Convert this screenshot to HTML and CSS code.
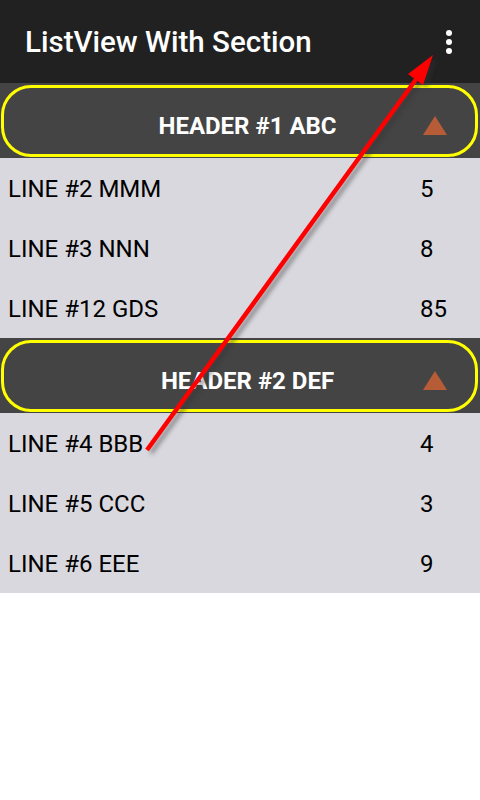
FILE: index.html
```html
<!DOCTYPE html>
<html>
<head>
<meta charset="utf-8">
<link rel="stylesheet" href="styles.css">
</head>
<body>
<div class="screen">
  <header class="appbar">
    <h1 class="title">ListView With Section</h1>
    <div class="menu"><span class="dot"></span><span class="dot"></span><span class="dot"></span></div>
  </header>
  <div class="list">
    <div class="section">
      <div class="pill"><span class="htext">HEADER #1 ABC</span><span class="tri"></span></div>
    </div>
    <div class="row"><span class="name">LINE #2 MMM</span><span class="num">5</span></div>
    <div class="row"><span class="name">LINE #3 NNN</span><span class="num">8</span></div>
    <div class="row"><span class="name">LINE #12 GDS</span><span class="num">85</span></div>
    <div class="section">
      <div class="pill"><span class="htext">HEADER #2 DEF</span><span class="tri"></span></div>
    </div>
    <div class="row"><span class="name">LINE #4 BBB</span><span class="num">4</span></div>
    <div class="row"><span class="name">LINE #5 CCC</span><span class="num">3</span></div>
    <div class="row"><span class="name">LINE #6 EEE</span><span class="num">9</span></div>
  </div>
  <svg class="arrow" width="480" height="800" viewBox="0 0 480 800">
    <defs>
      <filter id="sh" x="-20%" y="-20%" width="140%" height="140%">
        <feGaussianBlur stdDeviation="2"/>
      </filter>
    </defs>
    <g transform="translate(4,3)" opacity="0.45" filter="url(#sh)">
      <line x1="147" y1="450" x2="417" y2="78" stroke="#333" stroke-width="4.5"/>
      <polygon points="433,55 408,74 423,85" fill="#333"/>
    </g>
    <line x1="147" y1="450" x2="417" y2="78" stroke="#ff0000" stroke-width="4.5"/>
    <polygon points="433,55 408,74 423,85" fill="#ff0000"/>
  </svg>
</div>
</body>
</html>
```
FILE: styles.css
```css
* { box-sizing: border-box; }
html, body { margin: 0; padding: 0; background: #ffffff; }
body { font-family: Roboto, "Liberation Sans", sans-serif; }
.screen { position: relative; width: 480px; height: 800px; overflow: hidden; }
.appbar {
  height: 83px;
  background: #212121;
  display: flex;
  align-items: center;
  justify-content: space-between;
  padding: 0 28px 0 25px;
}
.title {
  margin: 0;
  color: #ffffff;
  font-size: 29.5px;
  font-weight: 500;
}
.menu { display: flex; flex-direction: column; gap: 3px; }
.dot { width: 6px; height: 6px; border-radius: 50%; background: #ffffff; }
.list { display: flex; flex-direction: column; }
.section {
  height: 75px;
  background: #444444;
  padding: 2px 2px 1px 1px;
}
.pill {
  height: 100%;
  border: 3px solid #ffff00;
  border-radius: 30px;
  display: flex;
  align-items: center;
  justify-content: center;
  position: relative;
  padding-top: 9px;
}
.htext {
  color: #ffffff;
  font-size: 24px;
  font-weight: 700;
  margin-left: 16px;
}
.tri {
  position: absolute;
  right: 28px;
  top: 50%;
  margin-top: -5px;
  width: 0; height: 0;
  border-left: 12px solid transparent;
  border-right: 12px solid transparent;
  border-bottom: 19px solid #b65d38;
}
.row {
  height: 60px;
  background: #d9d8de;
  display: flex;
  align-items: center;
  padding-left: 8px;
  padding-top: 2px;
  font-size: 24px;
  color: #000000;
}
.name { width: 412px; }
.arrow { position: absolute; left: 0; top: 0; pointer-events: none; }
```
